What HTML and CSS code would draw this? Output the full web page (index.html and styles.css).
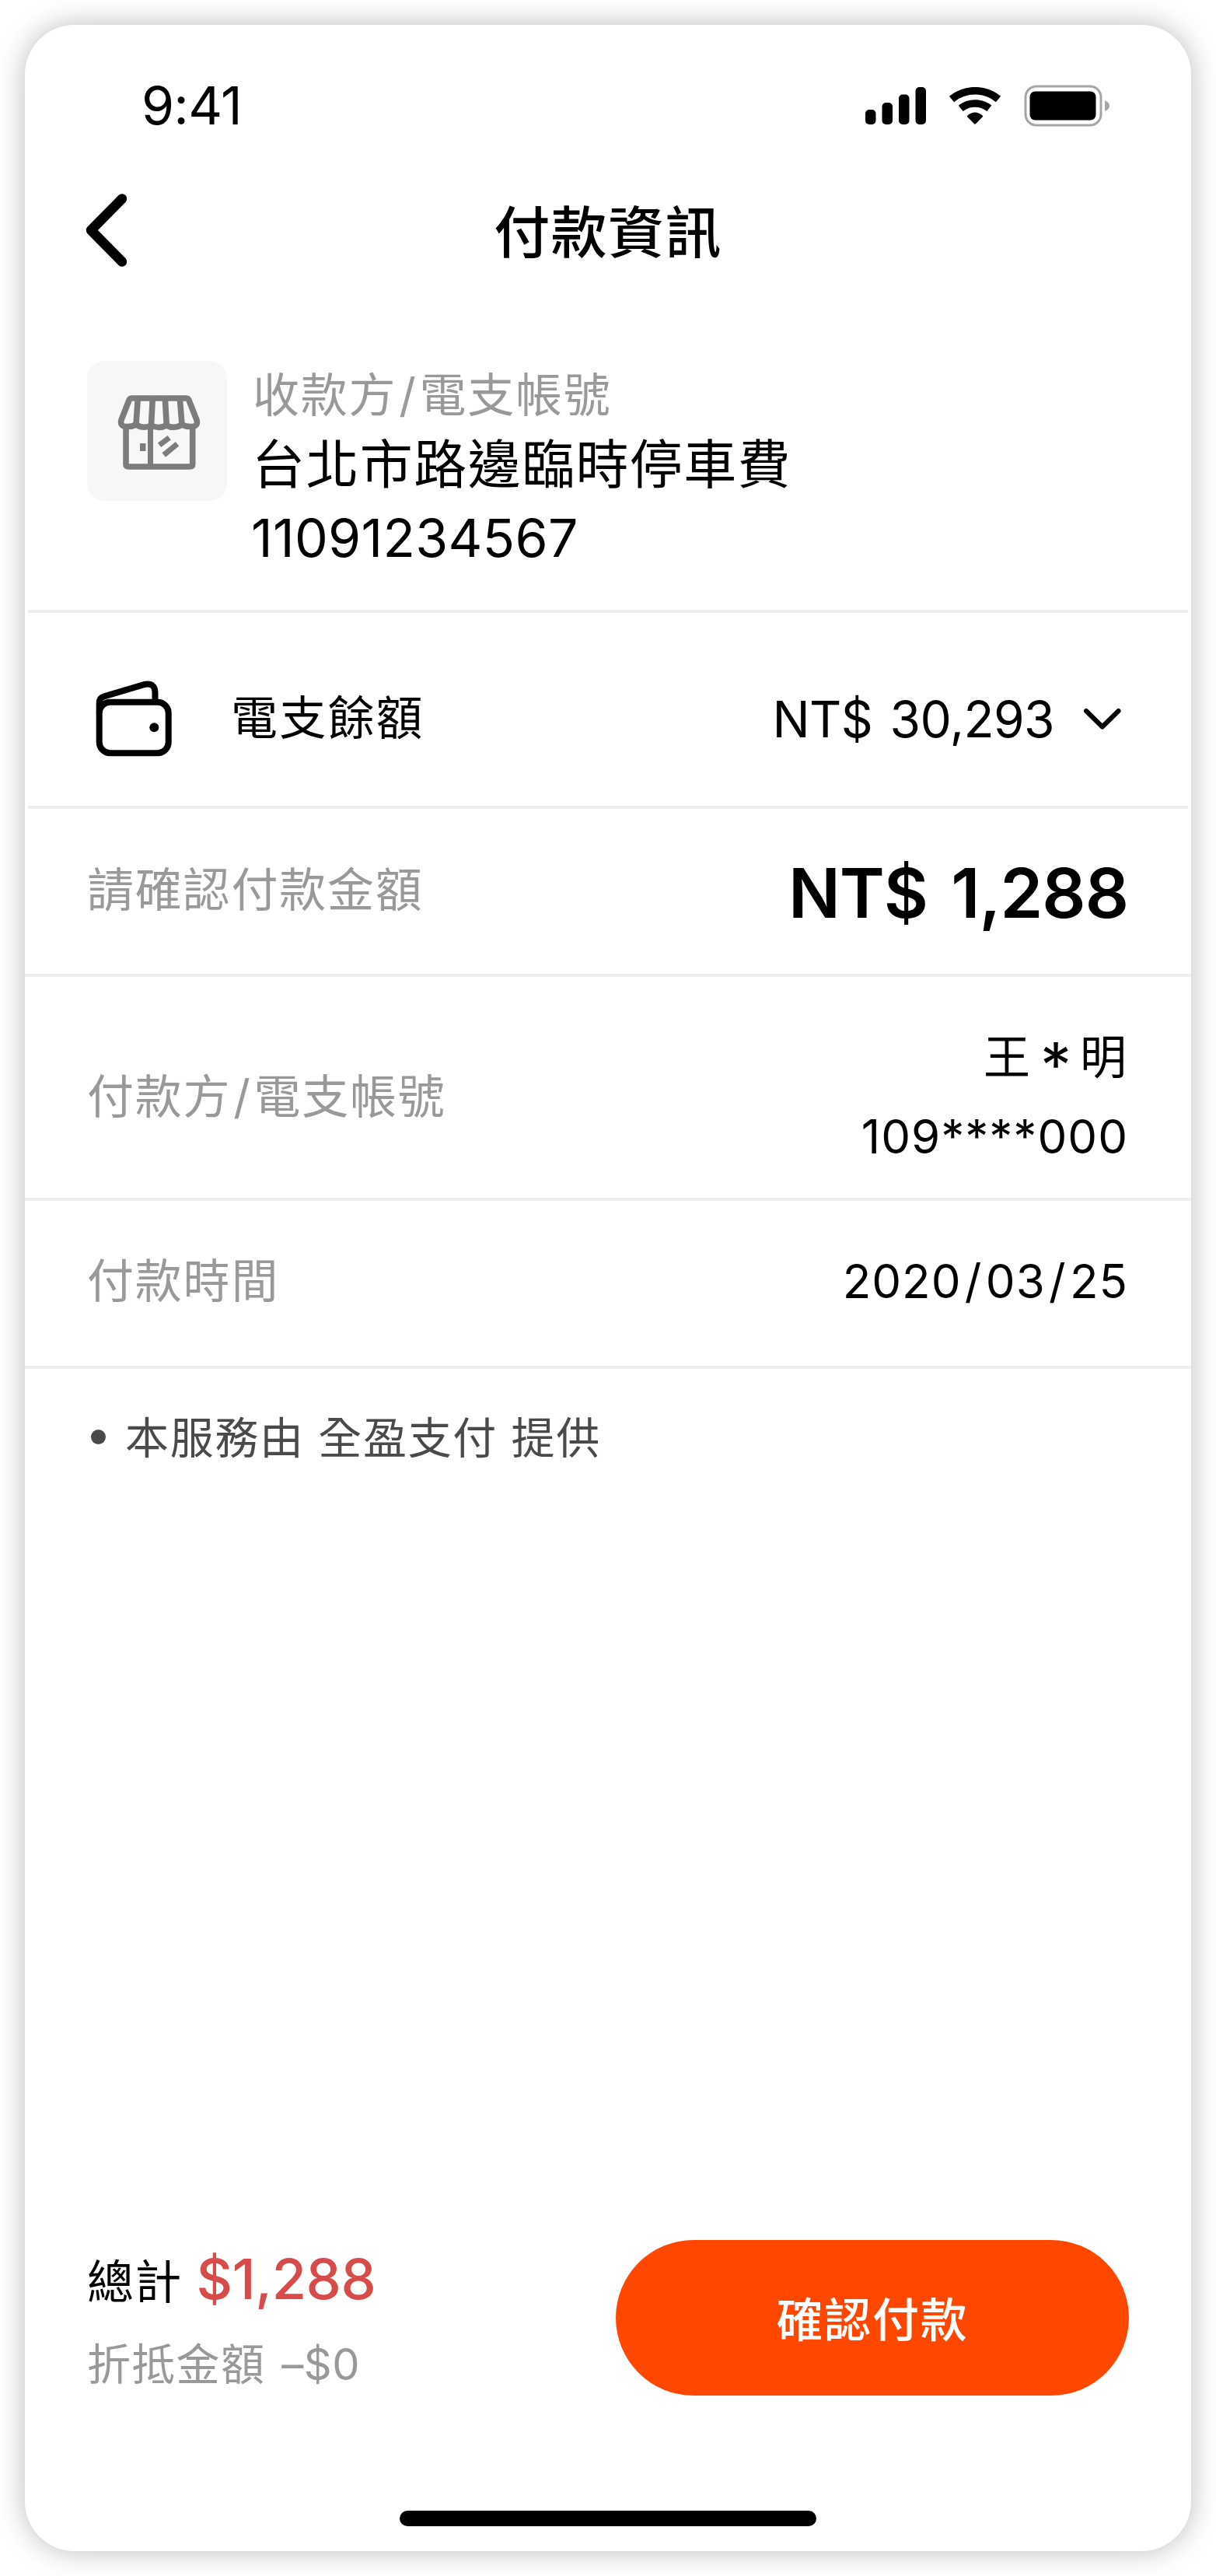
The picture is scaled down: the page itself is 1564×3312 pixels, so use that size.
FILE: index.html
```html
<!DOCTYPE html>
<html lang="zh-Hant">
<head>
    <meta charset="UTF-8">
    <meta name="viewport" content="width=device-width, initial-scale=1.0">
    <title>付款資訊</title>
    <link rel="stylesheet" href="styles.css">
</head>
<body>
    <div class="phone">
        <div class="status">
            <span class="time">9:41</span>
            <div class="status-icons">
                <svg class="signal" width="79" height="48" viewBox="0 0 79 48">
                    <rect x="0" y="29" width="13.5" height="19" rx="5" />
                    <rect x="21.5" y="20" width="13.5" height="28" rx="5" />
                    <rect x="43" y="9.5" width="13.5" height="38.5" rx="5" />
                    <rect x="64.5" y="0" width="13.5" height="48" rx="5" />
                </svg>
                <svg class="wifi" width="68" height="48" viewBox="0 0 68 48">
                    <path d="M4 15.5A47 47 0 0 1 64 15.5" fill="none" stroke="#000" stroke-width="9.6" />
                    <path d="M15.7 27.3A29.7 29.7 0 0 1 52.3 27.3" fill="none" stroke="#000" stroke-width="9.6" />
                    <path d="M24.5 36.5Q34 28.3 43.5 36.5Q44.6 37.4 43.8 38.2L34.9 47.3Q34 48 33.1 47.3L24.2 38.2Q23.4 37.4 24.5 36.5Z" />
                </svg>
                <svg class="battery" width="112" height="54" viewBox="0 0 112 54">
                    <rect x="2" y="2" width="97" height="50" rx="14" fill="none" stroke="#a6a6a6" stroke-width="3" />
                    <rect x="7.5" y="8.5" width="85" height="37" rx="7" />
                    <path d="M104 20Q110 22.5 110 27Q110 31.5 104 34Z" fill="#a6a6a6" />
                </svg>
            </div>
        </div>

        <div class="nav">
            <svg class="back" width="56" height="96" viewBox="0 0 56 96">
                <path d="M48 7.5L8 48L48 88.5" fill="none" stroke="#000" stroke-width="12.5" stroke-linecap="round" stroke-linejoin="round" />
            </svg>
            <h1>付款資訊</h1>
        </div>

        <div class="payee">
            <div class="store">
                <svg width="112" height="112" viewBox="0 0 112 112" fill="none" stroke="#7c7c7c" stroke-width="7.6">
                    <path d="M23.5 14H93.5Q96 14 97 16.5L107 42Q109 50 101 50.5Q94 51 88 48Q78 54 68 49Q58 54 48.5 49Q39 54 29 48Q23 51 16 50.5Q8 50 10 42L20 16.5Q21 14 23.5 14Z" stroke-linejoin="round" />
                    <path d="M31.3 14L29 48M50.3 14L48.5 49M66.3 14L68.3 49M85.3 14L88 48" />
                    <path d="M16 50V98.5Q16 102 19.5 102H98.2Q101.7 102 101.7 98.5V50" />
                    <path d="M47.5 50V102" stroke-width="7" />
                    <path d="M59 74.3L71.7 64.7M64.7 87L82 72.7" stroke-width="7" />
                    <rect x="34" y="72" width="7.5" height="10" fill="#7c7c7c" stroke="none" />
                </svg>
            </div>
            <div class="payee-info">
                <p class="label">收款方<i class="slash">/</i>電支帳號</p>
                <p class="payee-name">台北市路邊臨時停車費</p>
                <p class="payee-no">11091234567</p>
            </div>
        </div>

        <div class="wallet">
            <svg width="104" height="104" viewBox="0 0 104 104" fill="none" stroke="#000" stroke-width="8">
                <rect x="7.7" y="31.7" width="89" height="65.6" rx="14" />
                <path d="M7.7 46V33Q7.7 26 14 24.3L66 9Q79.5 6.5 79.5 20V32" />
                <circle cx="78.3" cy="64.3" r="6" fill="#000" stroke="none" />
            </svg>
            <span class="wallet-name">電支餘額</span>
            <span class="balance">NT$ 30,293</span>
            <svg width="48" height="28" viewBox="0 0 48 28">
                <path d="M3 3L23.8 23.5L44.6 3" fill="none" stroke="#000" stroke-width="6" stroke-linecap="round" stroke-linejoin="round" />
            </svg>
        </div>

        <div class="row row-amount">
            <span class="label">請確認付款金額</span>
            <span class="amount">NT$ 1,288</span>
        </div>
        <div class="row row-payer">
            <span class="label">付款方<i class="slash">/</i>電支帳號</span>
            <div class="value">
                <p class="payer-name">王<i>*</i>明</p>
                <p>109****000</p>
            </div>
        </div>
        <div class="row row-time">
            <span class="label">付款時間</span>
            <span class="value date">2020<i>/</i>03<i>/</i>25</span>
        </div>

        <ul class="notes">
            <li>本服務由 全盈支付 提供</li>
        </ul>

        <div class="footer">
            <div class="summary">
                <p class="total">總計<strong>$1,288</strong></p>
                <p class="discount">折抵金額<span>–$0</span></p>
            </div>
            <button class="pay">確認付款</button>
        </div>
        <div class="home-bar"></div>
    </div>
</body>
</html>
```

FILE: styles.css
```css
* {
    box-sizing: border-box;
}

body {
    margin: 0;
    padding: 32px;
    background-color: #fff;
    color: #000;
    font-family: Inter, "Noto Sans CJK TC", sans-serif;
    font-size: 60px;
}

p, h1, ul {
    margin: 0;
    padding: 0;
}

i {
    font-style: normal;
}

.phone {
    width: 1500px;
    height: 3248px;
    display: flex;
    flex-direction: column;
    background-color: #fff;
    border-radius: 64px;
    box-shadow: 0 0 36px rgba(0, 0, 0, 0.27);
}

/* status bar */
.status {
    height: 176px;
    padding: 30px 103px 0 150px;
    display: flex;
    align-items: center;
    justify-content: space-between;
}

.time {
    font-size: 68px;
    line-height: 80px;
    letter-spacing: -0.8px;
}

.status-icons {
    display: flex;
    align-items: center;
    padding-top: 2px;
}

.wifi {
    margin: 0 29px 0 28px;
}

/* title bar */
.nav {
    height: 184px;
    padding: 0 77px;
    display: grid;
    grid-template-columns: 56px 1fr 56px;
    align-items: center;
}

.back {
    margin-top: -9px;
}

.nav h1 {
    margin-top: -2px;
    font-size: 72px;
    font-weight: 500;
    line-height: 88px;
    letter-spacing: 1.4px;
    text-align: center;
}

/* payee */
.payee {
    height: 396px;
    margin: 0 4px;
    padding: 72px 76px 0;
    display: flex;
    gap: 33px;
    border-bottom: 4px solid #efefef;
}

.store {
    width: 180px;
    height: 180px;
    display: flex;
    align-items: center;
    justify-content: center;
    background-color: #f7f7f7;
    border-radius: 22px;
}

.payee-info {
    padding-top: 2px;
}

.payee-info .label {
    line-height: 84px;
}

.payee-name, .payee-no {
    font-size: 68px;
    line-height: 94px;
    letter-spacing: 1.4px;
}

.payee-name {
    margin-left: -1px;
}

.payee-no {
    margin-left: -2px;
    letter-spacing: 0.3px;
}

.label {
    color: #999;
    line-height: 76px;
    letter-spacing: 1.8px;
}

.slash {
    padding: 0 2.8px;
}

/* wallet */
.wallet {
    height: 252px;
    margin: 0 4px;
    padding: 22px 86px 0 84px;
    display: flex;
    align-items: center;
    border-bottom: 4px solid #efefef;
}

.wallet-name {
    margin-left: 73px;
    line-height: 76px;
    letter-spacing: 2.2px;
}

.balance {
    margin: 3px 38px 0 auto;
    font-size: 64px;
    line-height: 80px;
    letter-spacing: -0.6px;
    word-spacing: 5px;
}

.wallet svg:last-child {
    margin-top: 4px;
}

/* detail rows */
.row {
    height: 216px;
    padding: 0 81px 0 80px;
    display: flex;
    align-items: center;
    justify-content: space-between;
    border-bottom: 4px solid #efefef;
}

.row-amount {
    padding-bottom: 5px;
}

.amount {
    padding-top: 9px;
    font-size: 88px;
    font-weight: 600;
    line-height: 100px;
    letter-spacing: -1px;
    word-spacing: 9px;
}

.row-payer {
    height: 288px;
    padding-top: 24px;
}

.row-time {
    padding-bottom: 6px;
}

.value {
    line-height: 102px;
    letter-spacing: 1px;
    text-align: right;
}

.payer-name {
    letter-spacing: 2px;
}

.payer-name i {
    display: inline-block;
    width: 62px;
    font-size: 80px;
    line-height: 0;
    letter-spacing: 0;
    text-align: center;
    vertical-align: -17px;
}

.date i {
    padding: 0 4.3px;
}

.notes {
    list-style: none;
    padding: 51px 80px 0;
    color: #4a4a4a;
    font-size: 56px;
}

.notes li {
    display: flex;
    align-items: center;
    line-height: 76px;
    letter-spacing: 1.7px;
}

.notes li::before {
    content: "";
    width: 19px;
    height: 19px;
    margin: 0 25px 4px 5px;
    border-radius: 50%;
    background-color: #4a4a4a;
}

/* bottom bar */
.footer {
    height: 200px;
    margin-top: auto;
    padding: 0 80px;
    display: flex;
    justify-content: space-between;
}

.total {
    line-height: 108px;
    letter-spacing: 1.3px;
}

.total strong {
    margin-left: 18px;
    color: #d74b4b;
    font-size: 72px;
    font-weight: 500;
    line-height: 72px;
    letter-spacing: -0.4px;
}

.discount {
    color: #999;
    font-size: 56px;
    line-height: 104px;
    letter-spacing: 1.3px;
}

.discount span {
    margin-left: 21px;
    letter-spacing: 0.5px;
}

.pay {
    width: 660px;
    height: 200px;
    padding: 6px 0 0;
    border: none;
    border-radius: 100px;
    background-color: #ff4700;
    color: #fff;
    font-family: inherit;
    font-size: 60px;
    font-weight: 500;
    line-height: 76px;
    letter-spacing: 1.8px;
}

.home-bar {
    width: 536px;
    height: 20px;
    margin: 148px auto 32px;
    border-radius: 10px;
    background-color: #000;
}
```
